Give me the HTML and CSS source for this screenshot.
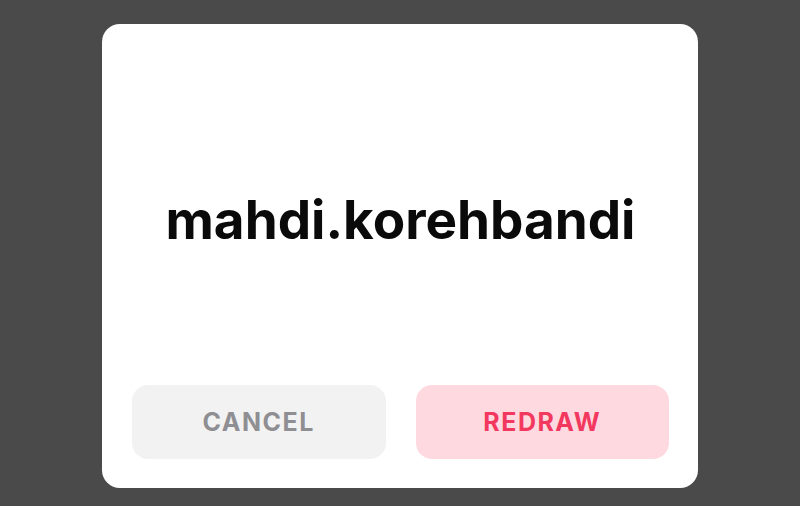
FILE: index.html
```html
<!DOCTYPE html>
<html lang="en">
<head>
  <meta charset="UTF-8" />
  <meta name="viewport" content="width=device-width, initial-scale=1">
  <title>Redraw</title>
  <link rel="stylesheet" href="styles.css">
</head>
<body>
  <div class="dialog">
    <div class="dialog-title">mahdi.korehbandi</div>
    <div class="dialog-actions">
      <button class="btn btn-cancel">CANCEL</button>
      <button class="btn btn-redraw">REDRAW</button>
    </div>
  </div>
</body>
</html>
```

FILE: styles.css
```css
html, body {
  margin: 0;
  padding: 0;
  height: 100%;
  overflow: hidden;
  background: #4a4a4a;
  font-family: Inter, "Noto Sans", sans-serif;
}

.dialog {
  width: 596px;
  height: 464px;
  margin: 24px auto 0;
  box-sizing: border-box;
  padding: 30px 29px 29px 30px;
  background: #ffffff;
  border-radius: 18px;
  display: flex;
  flex-direction: column;
}

.dialog-title {
  flex: 1;
  display: flex;
  justify-content: center;
  align-items: center;
  font-size: 53px;
  font-weight: 700;
  color: #0a0a0a;
}

.dialog-actions {
  display: flex;
  gap: 30px;
}

.btn {
  flex: 1;
  height: 74px;
  border: none;
  border-radius: 16px;
  font-family: Inter, "Noto Sans", sans-serif;
  font-size: 25px;
  font-weight: 700;
  letter-spacing: 1.5px;
  cursor: pointer;
}

.btn-cancel {
  background: #f2f2f2;
  color: #8e8e93;
}

.btn-redraw {
  background: #ffd9e0;
  color: #f2385f;
}
```
